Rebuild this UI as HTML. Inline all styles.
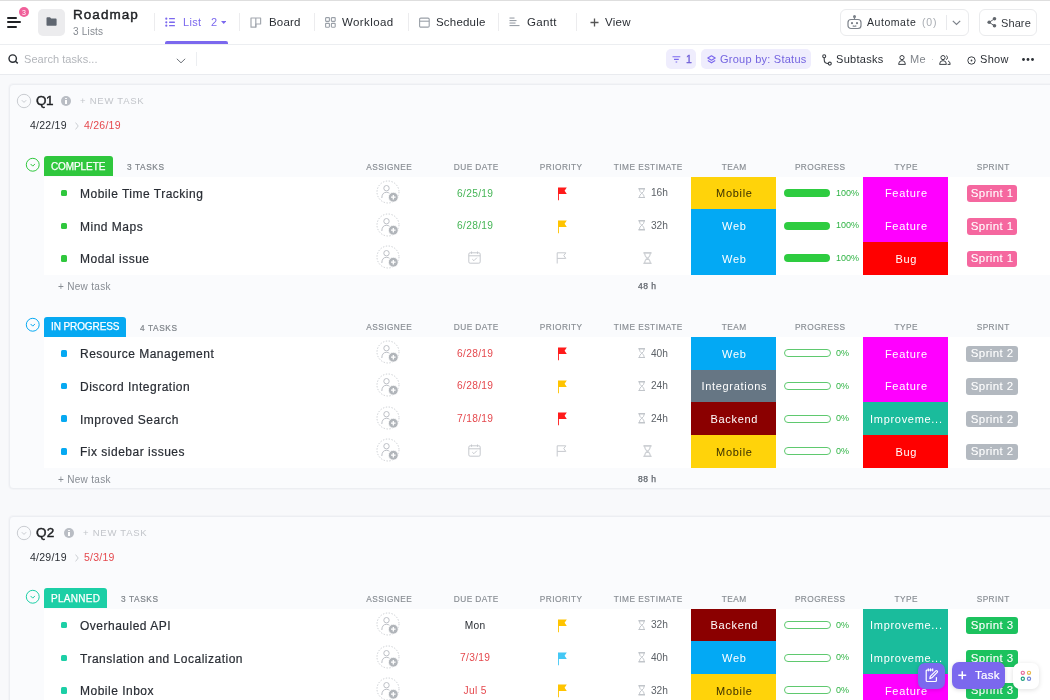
<!DOCTYPE html><html><head><meta charset="utf-8"><style>
html,body{margin:0;padding:0;width:1050px;height:700px;overflow:hidden;background:#f8f9fb;}
body{position:relative;font-family:"Liberation Sans", sans-serif;}
.t{position:absolute;white-space:nowrap;line-height:1;will-change:transform;}
.b{position:absolute;}
</style></head><body>
<div class="b" style="left:0px;top:0px;width:1050px;height:44px;background:#fff;"></div>
<div class="b" style="left:0px;top:0px;width:1050px;height:1px;background:#dedede;"></div>
<div class="b" style="left:0px;top:44px;width:1050px;height:1px;background:#eceef1;"></div>
<div class="b" style="left:6.7px;top:17.0px;width:10.5px;height:1.8px;background:#1f2124;border-radius:1px;"></div>
<div class="b" style="left:6.7px;top:21.4px;width:14px;height:1.8px;background:#1f2124;border-radius:1px;"></div>
<div class="b" style="left:6.7px;top:25.8px;width:10.5px;height:1.8px;background:#1f2124;border-radius:1px;"></div>
<div class="b" style="left:19px;top:7px;width:10px;height:10px;background:#f0609a;border-radius:50%;"></div>
<div class="t" style="left:19.00px;width:10px;text-align:center;top:9.07px;font-size:7px;color:#fff;font-weight:400;letter-spacing:0px;text-indent:0px;">3</div>
<div class="b" style="left:38px;top:9px;width:27px;height:27px;background:#ececee;border-radius:5px;"></div>
<svg class="b" style="left:46px;top:17px" width="11" height="9" viewBox="0 0 11 9"><path d="M0.5 1.2 Q0.5 0.3 1.4 0.3 H4 L5.2 1.6 H9.8 Q10.6 1.6 10.6 2.4 V7.9 Q10.6 8.7 9.8 8.7 H1.3 Q0.5 8.7 0.5 7.9 Z" fill="#5f6670"/></svg>
<div class="t" style="left:72.8px;top:8.47px;font-size:13.5px;color:#1f2124;font-weight:400;letter-spacing:1.05px;-webkit-text-stroke:0.45px #1f2124;">Roadmap</div>
<div class="t" style="left:73px;top:27.14px;font-size:10px;color:#858a91;font-weight:400;letter-spacing:0.2px;">3 Lists</div>
<div class="b" style="left:154px;top:13px;width:1px;height:18px;background:#ececee;"></div>
<div class="b" style="left:239px;top:13px;width:1px;height:18px;background:#ececee;"></div>
<div class="b" style="left:314px;top:13px;width:1px;height:18px;background:#ececee;"></div>
<div class="b" style="left:408px;top:13px;width:1px;height:18px;background:#ececee;"></div>
<div class="b" style="left:498px;top:13px;width:1px;height:18px;background:#ececee;"></div>
<div class="b" style="left:576px;top:13px;width:1px;height:18px;background:#ececee;"></div>
<svg class="b" style="left:164px;top:17px" width="12" height="10" viewBox="0 0 12 10"><g fill="#7b68ee"><circle cx="2.3" cy="1.7" r="1.1"/><circle cx="2.3" cy="5.3" r="1.1"/><circle cx="2.3" cy="8.7" r="1.1"/><rect x="5" y="1" width="6" height="1.3" rx=".6"/><rect x="5" y="4.6" width="6" height="1.3" rx=".6"/><rect x="5" y="8" width="6" height="1.3" rx=".6"/></g></svg>
<div class="t" style="left:182.5px;top:16.99px;font-size:11px;color:#7b68ee;font-weight:400;letter-spacing:0.3px;">List</div>
<div class="t" style="left:211px;top:16.99px;font-size:11px;color:#7b68ee;font-weight:400;letter-spacing:0px;">2</div>
<svg class="b" style="left:220.5px;top:21px" width="5.5" height="3" viewBox="0 0 5.5 3"><path d="M0 0 H5.5 L2.75 3 Z" fill="#7b68ee"/></svg>
<div class="b" style="left:165px;top:41px;width:63px;height:3px;background:#7b68ee;border-radius:2px 2px 0 0;"></div>
<svg class="b" style="left:250px;top:17px" width="12" height="11" viewBox="0 0 12 11"><g fill="none" stroke="#a3a8af" stroke-width="1.2" stroke-linejoin="round"><path d="M1 1 H10.6 V7 H5.8 V10.2 H1 Z"/><path d="M5.8 1 V10.2"/></g></svg>
<div class="t" style="left:268.5px;top:16.57px;font-size:11.5px;color:#2a2e34;font-weight:400;letter-spacing:0.2px;">Board</div>
<svg class="b" style="left:324.5px;top:17px" width="11" height="11" viewBox="0 0 11 11"><g fill="none" stroke="#9aa0a8" stroke-width="1.1"><rect x="0.6" y="0.6" width="3.8" height="3.8" rx=".6"/><rect x="6.4" y="0.6" width="3.8" height="3.8" rx=".6"/><rect x="0.6" y="6.4" width="3.8" height="3.8" rx=".6"/><rect x="6.4" y="6.4" width="3.8" height="3.8" rx=".6"/></g></svg>
<div class="t" style="left:342.3px;top:16.57px;font-size:11.5px;color:#2a2e34;font-weight:400;letter-spacing:0.4px;">Workload</div>
<svg class="b" style="left:418.5px;top:17px" width="11" height="11" viewBox="0 0 11 11"><g fill="none" stroke="#9aa0a8" stroke-width="1.1"><rect x="0.6" y="1.1" width="9.6" height="9" rx="1.2"/><path d="M0.6 4.2 H10.2"/></g></svg>
<div class="t" style="left:436.4px;top:16.57px;font-size:11.5px;color:#2a2e34;font-weight:400;letter-spacing:0.2px;">Schedule</div>
<svg class="b" style="left:508.5px;top:17px" width="11" height="11" viewBox="0 0 11 11"><g fill="#9aa0a8"><rect x="0.5" y="0.5" width="5" height="1.1"/><rect x="0.5" y="3" width="7" height="1.1"/><rect x="0.5" y="5.5" width="6" height="1.1"/><rect x="0.5" y="8" width="10" height="1.1"/></g></svg>
<div class="t" style="left:527px;top:16.57px;font-size:11.5px;color:#2a2e34;font-weight:400;letter-spacing:0.3px;">Gantt</div>
<svg class="b" style="left:590px;top:18px" width="9" height="9" viewBox="0 0 9 9"><g stroke="#555" stroke-width="1.3"><path d="M4.5 0.5 V8.5 M0.5 4.5 H8.5"/></g></svg>
<div class="t" style="left:605px;top:16.87px;font-size:11.5px;color:#2a2e34;font-weight:400;letter-spacing:0.3px;">View</div>
<div class="b" style="left:840px;top:9px;width:129px;height:27px;box-sizing:border-box;border:1px solid #eaebed;border-radius:6px;background:#fff;"></div>
<svg class="b" style="left:846.5px;top:14.5px" width="15" height="15" viewBox="0 0 15 15"><g fill="none" stroke="#7c828a" stroke-width="1.2"><rect x="1" y="4.5" width="13" height="9" rx="3"/><path d="M7.5 4.5 V2"/><circle cx="7.5" cy="1.6" r=".9" fill="#7c828a"/><circle cx="5" cy="8.2" r=".5" fill="#7c828a"/><circle cx="10" cy="8.2" r=".5" fill="#7c828a"/><path d="M5.7 10.7 Q7.5 11.8 9.3 10.7"/></g></svg>
<div class="t" style="left:867.3px;top:16.91px;font-size:10.5px;color:#2a2e34;font-weight:400;letter-spacing:0.55px;">Automate</div>
<div class="t" style="left:921.7px;top:16.91px;font-size:10.5px;color:#a9adb3;font-weight:400;letter-spacing:0.8px;">(0)</div>
<div class="b" style="left:945.5px;top:15px;width:1px;height:15px;background:#e8e9ec;"></div>
<svg class="b" style="left:951.5px;top:19.5px" width="9" height="6" viewBox="0 0 9 6"><path d="M0.8 0.8 L4.5 4.5 L8.2 0.8" fill="none" stroke="#7c828a" stroke-width="1.2"/></svg>
<div class="b" style="left:979px;top:9px;width:57.5px;height:27px;box-sizing:border-box;border:1px solid #eaebed;border-radius:6px;background:#fff;"></div>
<svg class="b" style="left:986.5px;top:17px" width="10" height="11" viewBox="0 0 10 11"><g fill="#62676d"><circle cx="7.5" cy="1.8" r="1.8"/><circle cx="2.2" cy="5.3" r="1.8"/><circle cx="7.5" cy="8.8" r="1.8"/></g><path d="M7.5 1.8 L2.2 5.3 L7.5 8.8" stroke="#62676d" stroke-width="1" fill="none"/></svg>
<div class="t" style="left:1001.3px;top:17.99px;font-size:11px;color:#33373d;font-weight:400;letter-spacing:0.1px;">Share</div>
<div class="b" style="left:0px;top:45px;width:1050px;height:29px;background:#fff;"></div>
<div class="b" style="left:0px;top:74px;width:1050px;height:1px;background:#e9ebef;"></div>
<svg class="b" style="left:7.5px;top:54.3px" width="11" height="10" viewBox="0 0 11 10"><g fill="none" stroke="#2a2e34" stroke-width="1.4"><circle cx="4.7" cy="4.6" r="3.7"/><path d="M7.4 7.3 L9.8 9.4"/></g></svg>
<div class="t" style="left:23.6px;top:53.69px;font-size:11px;color:#b3b6bb;font-weight:400;letter-spacing:0.05px;">Search tasks...</div>
<svg class="b" style="left:175.5px;top:57.5px" width="10" height="6" viewBox="0 0 10 6"><path d="M0.8 0.8 L5 4.8 L9.2 0.8" fill="none" stroke="#6d7279" stroke-width="1"/></svg>
<div class="b" style="left:195.5px;top:52px;width:1px;height:14px;background:#eceef1;"></div>
<div class="b" style="left:666.3px;top:49.4px;width:30px;height:19.5px;background:#efedfd;border-radius:5px;"></div>
<svg class="b" style="left:672px;top:55.5px" width="9" height="7" viewBox="0 0 9 7"><g stroke="#7b68ee" stroke-width="1.1"><path d="M0.5 0.8 H8.3 M2 3.4 H6.8 M3.6 6 H5.2"/></g></svg>
<div class="t" style="left:685.5px;top:54.11px;font-size:10.5px;color:#6b5bd6;font-weight:400;letter-spacing:0px;-webkit-text-stroke:0.3px #6b5bd6;">1</div>
<div class="b" style="left:701.3px;top:49.4px;width:110px;height:19.5px;background:#efedfd;border-radius:5px;"></div>
<svg class="b" style="left:706.5px;top:54.5px" width="9" height="10" viewBox="0 0 9 10"><g fill="none" stroke="#7b68ee" stroke-width="1.2" stroke-linejoin="round"><path d="M4.5 0.8 L8.2 3 L4.5 5.2 L0.8 3 Z"/><path d="M0.8 5.6 L4.5 7.8 L8.2 5.6"/></g></svg>
<div class="t" style="left:720px;top:53.69px;font-size:11px;color:#7464e0;font-weight:400;letter-spacing:0.25px;">Group by: Status</div>
<svg class="b" style="left:821.5px;top:53.5px" width="10" height="12" viewBox="0 0 10 12"><g fill="none" stroke="#3c4046" stroke-width="1.1"><circle cx="2.2" cy="2.2" r="1.5"/><circle cx="7.8" cy="9.6" r="1.5"/><path d="M2.2 3.7 V5.5 Q2.2 9.6 6.3 9.6"/></g></svg>
<div class="t" style="left:836px;top:53.89px;font-size:11px;color:#2a2e34;font-weight:400;letter-spacing:0.3px;">Subtasks</div>
<svg class="b" style="left:897.5px;top:54.5px" width="8" height="10" viewBox="0 0 8 10"><g fill="none" stroke="#3c4046" stroke-width="1"><circle cx="4" cy="2.6" r="2.1"/><path d="M0.6 9.4 Q0.6 5.6 4 5.6 Q7.4 5.6 7.4 9.4 Z"/></g></svg>
<div class="t" style="left:910.3px;top:53.89px;font-size:11px;color:#80858b;font-weight:400;letter-spacing:0.3px;">Me</div>
<div class="b" style="left:931.7px;top:58.8px;width:1.4px;height:1.4px;background:#c4c7cc;border-radius:50%;"></div>
<svg class="b" style="left:939px;top:54.5px" width="12" height="10" viewBox="0 0 12 10"><g fill="none" stroke="#3c4046" stroke-width="1"><circle cx="4" cy="2.6" r="2.1"/><path d="M0.6 9.4 Q0.6 5.6 4 5.6 Q7.4 5.6 7.4 9.4 Z"/><path d="M7.2 0.7 A2.1 2.1 0 0 1 7.2 4.6 M9 5.9 Q11.2 6.5 11.2 9.4 H8.6"/></g></svg>
<svg class="b" style="left:966.5px;top:55.5px" width="9" height="9" viewBox="0 0 9 9"><g fill="none" stroke="#3c4046" stroke-width="1"><circle cx="4.5" cy="4.5" r="3.7"/><circle cx="4.5" cy="4.5" r="0.9" fill="#3c4046" stroke="none"/></g></svg>
<div class="t" style="left:980.3px;top:53.89px;font-size:11px;color:#2a2e34;font-weight:400;letter-spacing:0.3px;">Show</div>
<svg class="b" style="left:1022px;top:57.5px" width="12" height="3" viewBox="0 0 12 3"><g fill="#2a2e34"><circle cx="1.5" cy="1.5" r="1.4"/><circle cx="6" cy="1.5" r="1.4"/><circle cx="10.5" cy="1.5" r="1.4"/></g></svg>
<div class="b" style="left:9px;top:84px;width:1050px;height:405px;box-sizing:border-box;border:1px solid #eceef2;border-radius:4px;background:#fafbfd;box-shadow:0 0 0 1px #f3f4f7;"></div>
<svg class="b" style="left:16.4px;top:93.0px" width="16" height="16" viewBox="0 0 16 16"><circle cx="8.0" cy="8.0" r="6.7" fill="none" stroke="#c9ccd1" stroke-width="1"/><path d="M5.8 7.2 L8.0 9.4 L10.2 7.2" fill="none" stroke="#c9ccd1" stroke-width="1"/></svg>
<div class="t" style="left:36.4px;top:93.77px;font-size:13.5px;color:#1f2124;font-weight:400;letter-spacing:-0.6px;-webkit-text-stroke:0.45px #1f2124;">Q1</div>
<div class="b" style="left:60.7px;top:95.8px;width:10.5px;height:10.5px;border-radius:50%;background:#b9bdc4;"></div>
<div class="b" style="left:65.3px;top:98px;width:1.3px;height:1.3px;background:#fff;border-radius:50%;"></div>
<div class="b" style="left:65.3px;top:100.2px;width:1.3px;height:4px;background:#fff;"></div>
<div class="t" style="left:80.30000000000001px;top:96.26px;font-size:9.5px;color:#c2c5ca;font-weight:400;letter-spacing:0.75px;">+ NEW TASK</div>
<div class="t" style="left:30px;top:119.71px;font-size:10.5px;color:#2a2e34;font-weight:400;letter-spacing:0.25px;">4/22/19</div>
<svg class="b" style="left:74.5px;top:121.5px" width="4" height="8" viewBox="0 0 4 8"><path d="M0.6 0.6 L3.2 4 L0.6 7.4" fill="none" stroke="#c6c9ce" stroke-width="0.9"/></svg>
<div class="t" style="left:84px;top:119.71px;font-size:10.5px;color:#e5484d;font-weight:400;letter-spacing:0.25px;">4/26/19</div>
<svg class="b" style="left:25.450000000000003px;top:156.75px" width="15.5" height="15.5" viewBox="0 0 15.5 15.5"><circle cx="7.75" cy="7.75" r="6.45" fill="none" stroke="#2fc73d" stroke-width="1"/><path d="M5.55 6.95 L7.75 9.15 L9.95 6.95" fill="none" stroke="#2fc73d" stroke-width="1"/></svg>
<div class="b" style="left:43.8px;top:156.3px;width:69.3px;height:20px;background:#2fc73d;border-radius:3px 3px 0 0;"></div>
<div class="t" style="left:51.4px;top:161.94px;font-size:10px;color:#fff;font-weight:400;letter-spacing:-0.1px;-webkit-text-stroke:0.25px #fff;">COMPLETE</div>
<div class="t" style="left:126.89999999999999px;top:163.47px;font-size:8.3px;color:#7f848a;font-weight:400;letter-spacing:0.6px;-webkit-text-stroke:0.2px #7f848a;">3 TASKS</div>
<div class="t" style="left:329.30px;width:120px;text-align:center;top:162.77px;font-size:8.3px;color:#878c92;font-weight:400;letter-spacing:0.45px;text-indent:0.45px;-webkit-text-stroke:0.15px #878c92;">ASSIGNEE</div>
<div class="t" style="left:415.50px;width:120px;text-align:center;top:162.77px;font-size:8.3px;color:#878c92;font-weight:400;letter-spacing:0.45px;text-indent:0.45px;-webkit-text-stroke:0.15px #878c92;">DUE DATE</div>
<div class="t" style="left:501.00px;width:120px;text-align:center;top:162.77px;font-size:8.3px;color:#878c92;font-weight:400;letter-spacing:0.45px;text-indent:0.45px;-webkit-text-stroke:0.15px #878c92;">PRIORITY</div>
<div class="t" style="left:588.00px;width:120px;text-align:center;top:162.77px;font-size:8.3px;color:#878c92;font-weight:400;letter-spacing:0.45px;text-indent:0.45px;-webkit-text-stroke:0.15px #878c92;">TIME ESTIMATE</div>
<div class="t" style="left:674.00px;width:120px;text-align:center;top:162.77px;font-size:8.3px;color:#878c92;font-weight:400;letter-spacing:0.45px;text-indent:0.45px;-webkit-text-stroke:0.15px #878c92;">TEAM</div>
<div class="t" style="left:760.00px;width:120px;text-align:center;top:162.77px;font-size:8.3px;color:#878c92;font-weight:400;letter-spacing:0.45px;text-indent:0.45px;-webkit-text-stroke:0.15px #878c92;">PROGRESS</div>
<div class="t" style="left:846.00px;width:120px;text-align:center;top:162.77px;font-size:8.3px;color:#878c92;font-weight:400;letter-spacing:0.45px;text-indent:0.45px;-webkit-text-stroke:0.15px #878c92;">TYPE</div>
<div class="t" style="left:932.50px;width:120px;text-align:center;top:162.77px;font-size:8.3px;color:#878c92;font-weight:400;letter-spacing:0.45px;text-indent:0.45px;-webkit-text-stroke:0.15px #878c92;">SPRINT</div>
<div class="b" style="left:43.8px;top:176.8px;width:1006.2px;height:98.001px;background:#fff;"></div>
<div class="b" style="left:60.8px;top:189.83350000000002px;width:6.6px;height:6.6px;background:#2fc73d;border-radius:1.5px;"></div>
<div class="t" style="left:80.3px;top:187.98px;font-size:12px;color:#292d34;font-weight:400;letter-spacing:0.5px;-webkit-text-stroke:0.2px #292d34;">Mobile Time Tracking</div>
<svg class="b" style="left:376.1px;top:180.13350000000003px" width="24" height="24" viewBox="0 0 24 24"><circle cx="12" cy="12" r="11" fill="none" stroke="#c9ccd1" stroke-width="1" stroke-dasharray="1.3 1.6"/><g fill="none" stroke="#b5b9bf" stroke-width="0.9"><circle cx="10.5" cy="8.2" r="2.7"/><path d="M5.8 18 Q6 12.3 10.5 12.3 Q12.5 12.3 13.5 13.3"/></g><circle cx="17.3" cy="17.2" r="4.9" fill="#b1b5ba" stroke="#fff" stroke-width="0.8"/><path d="M17.3 14.9 V19.5 M15 17.2 H19.6" stroke="#fff" stroke-width="1.3"/></svg>
<div class="t" style="left:374.72px;width:200px;text-align:center;top:188.50px;font-size:10.2px;color:#45b556;font-weight:400;letter-spacing:0.35px;text-indent:0.35px;">6/25/19</div>
<svg class="b" style="left:556.5px;top:186.83350000000002px" width="11" height="14" viewBox="0 0 11 14"><path d="M1 0.5 H9.8 L7.6 3.7 L9.8 6.9 H1.9 V13.3 H1 Z" fill="#ff1b1b"/></svg>
<svg class="b" style="left:637.5px;top:187.73350000000002px" width="7.6" height="10.45" viewBox="0 0 8 11"><g fill="none" stroke="#c1c5ca" stroke-width="1"><path d="M1.4 0.7 Q1.4 4 4 5.5 Q6.6 4 6.6 0.7 M1.4 10.3 Q1.4 7 4 5.5 Q6.6 7 6.6 10.3"/></g><rect x="0.3" y="0" width="7.4" height="1.6" rx=".5" fill="#c1c5ca"/><rect x="0.3" y="9.4" width="7.4" height="1.6" rx=".5" fill="#c1c5ca"/></svg>
<div class="t" style="left:651.4px;top:188.40px;font-size:10.2px;color:#5d6268;font-weight:400;letter-spacing:-0.1px;">16h</div>
<div class="b" style="left:691.1px;top:176.8px;width:84.7px;height:33.067px;background:#ffd30a;"></div>
<div class="t" style="left:683.50px;width:100px;text-align:center;top:188.32px;font-size:11px;color:#3b3000;font-weight:400;letter-spacing:0.7px;text-indent:0.7px;">Mobile</div>
<div class="b" style="left:784px;top:189.13350000000003px;width:46px;height:8px;background:#2ecc40;border-radius:4px;"></div>
<div class="t" style="left:836px;top:188.82px;font-size:9px;color:#2fb344;font-weight:400;letter-spacing:0px;">100%</div>
<div class="b" style="left:863.4px;top:176.8px;width:84.7px;height:33.067px;background:#ff00ff;"></div>
<div class="t" style="left:855.70px;width:100px;text-align:center;top:188.32px;font-size:11px;color:#fff;font-weight:400;letter-spacing:0.7px;text-indent:0.7px;">Feature</div>
<div class="b" style="left:967.3px;top:185.33350000000002px;width:49.4px;height:16.5px;background:#f5679f;border-radius:3px;"></div>
<div class="t" style="left:962.00px;width:60px;text-align:center;top:188.00px;font-size:11.5px;color:#fff;font-weight:400;letter-spacing:0.4px;text-indent:0.4px;-webkit-text-stroke:0.08px #fff;">Sprint 1</div>
<div class="b" style="left:60.8px;top:222.5005px;width:6.6px;height:6.6px;background:#2fc73d;border-radius:1.5px;"></div>
<div class="t" style="left:80.3px;top:220.64px;font-size:12px;color:#292d34;font-weight:400;letter-spacing:0.5px;-webkit-text-stroke:0.2px #292d34;">Mind Maps</div>
<svg class="b" style="left:376.1px;top:212.8005px" width="24" height="24" viewBox="0 0 24 24"><circle cx="12" cy="12" r="11" fill="none" stroke="#c9ccd1" stroke-width="1" stroke-dasharray="1.3 1.6"/><g fill="none" stroke="#b5b9bf" stroke-width="0.9"><circle cx="10.5" cy="8.2" r="2.7"/><path d="M5.8 18 Q6 12.3 10.5 12.3 Q12.5 12.3 13.5 13.3"/></g><circle cx="17.3" cy="17.2" r="4.9" fill="#b1b5ba" stroke="#fff" stroke-width="0.8"/><path d="M17.3 14.9 V19.5 M15 17.2 H19.6" stroke="#fff" stroke-width="1.3"/></svg>
<div class="t" style="left:374.72px;width:200px;text-align:center;top:221.17px;font-size:10.2px;color:#45b556;font-weight:400;letter-spacing:0.35px;text-indent:0.35px;">6/28/19</div>
<svg class="b" style="left:556.5px;top:219.5005px" width="11" height="14" viewBox="0 0 11 14"><path d="M1 0.5 H9.8 L7.6 3.7 L9.8 6.9 H1.9 V13.3 H1 Z" fill="#ffc400"/></svg>
<svg class="b" style="left:637.5px;top:220.4005px" width="7.6" height="10.45" viewBox="0 0 8 11"><g fill="none" stroke="#c1c5ca" stroke-width="1"><path d="M1.4 0.7 Q1.4 4 4 5.5 Q6.6 4 6.6 0.7 M1.4 10.3 Q1.4 7 4 5.5 Q6.6 7 6.6 10.3"/></g><rect x="0.3" y="0" width="7.4" height="1.6" rx=".5" fill="#c1c5ca"/><rect x="0.3" y="9.4" width="7.4" height="1.6" rx=".5" fill="#c1c5ca"/></svg>
<div class="t" style="left:651.4px;top:221.07px;font-size:10.2px;color:#5d6268;font-weight:400;letter-spacing:-0.1px;">32h</div>
<div class="b" style="left:691.1px;top:209.467px;width:84.7px;height:33.067px;background:#03a9f4;"></div>
<div class="t" style="left:683.50px;width:100px;text-align:center;top:220.99px;font-size:11px;color:#fff;font-weight:400;letter-spacing:0.7px;text-indent:0.7px;">Web</div>
<div class="b" style="left:784px;top:221.8005px;width:46px;height:8px;background:#2ecc40;border-radius:4px;"></div>
<div class="t" style="left:836px;top:221.48px;font-size:9px;color:#2fb344;font-weight:400;letter-spacing:0px;">100%</div>
<div class="b" style="left:863.4px;top:209.467px;width:84.7px;height:33.067px;background:#ff00ff;"></div>
<div class="t" style="left:855.70px;width:100px;text-align:center;top:220.99px;font-size:11px;color:#fff;font-weight:400;letter-spacing:0.7px;text-indent:0.7px;">Feature</div>
<div class="b" style="left:967.3px;top:218.0005px;width:49.4px;height:16.5px;background:#f5679f;border-radius:3px;"></div>
<div class="t" style="left:962.00px;width:60px;text-align:center;top:220.67px;font-size:11.5px;color:#fff;font-weight:400;letter-spacing:0.4px;text-indent:0.4px;-webkit-text-stroke:0.08px #fff;">Sprint 1</div>
<div class="b" style="left:60.8px;top:255.16750000000002px;width:6.6px;height:6.6px;background:#2fc73d;border-radius:1.5px;"></div>
<div class="t" style="left:80.3px;top:253.31px;font-size:12px;color:#292d34;font-weight:400;letter-spacing:0.5px;-webkit-text-stroke:0.2px #292d34;">Modal issue</div>
<svg class="b" style="left:376.1px;top:245.46750000000003px" width="24" height="24" viewBox="0 0 24 24"><circle cx="12" cy="12" r="11" fill="none" stroke="#c9ccd1" stroke-width="1" stroke-dasharray="1.3 1.6"/><g fill="none" stroke="#b5b9bf" stroke-width="0.9"><circle cx="10.5" cy="8.2" r="2.7"/><path d="M5.8 18 Q6 12.3 10.5 12.3 Q12.5 12.3 13.5 13.3"/></g><circle cx="17.3" cy="17.2" r="4.9" fill="#b1b5ba" stroke="#fff" stroke-width="0.8"/><path d="M17.3 14.9 V19.5 M15 17.2 H19.6" stroke="#fff" stroke-width="1.3"/></svg>
<svg class="b" style="left:468px;top:250.96750000000003px" width="13" height="13" viewBox="0 0 13 13"><g fill="none" stroke="#c6c9ce" stroke-width="1"><rect x="0.8" y="1.8" width="11.4" height="10.4" rx="1.3"/><path d="M0.8 4.8 H12.2 M3.5 0.5 V2.8 M9.5 0.5 V2.8 M4.3 8.2 L5.9 9.7 L8.9 6.7"/></g></svg>
<svg class="b" style="left:556.3px;top:251.96750000000003px" width="11" height="12" viewBox="0 0 11 12"><path d="M1.2 11.5 V0.8 H9.8 L7.8 3.6 L9.8 6.4 H1.2" fill="none" stroke="#c6c9ce" stroke-width="1"/></svg>
<svg class="b" style="left:643px;top:252.16750000000002px" width="8.96" height="12.32" viewBox="0 0 8 11"><g fill="none" stroke="#cdd0d4" stroke-width="1"><path d="M1.4 0.7 Q1.4 4 4 5.5 Q6.6 4 6.6 0.7 M1.4 10.3 Q1.4 7 4 5.5 Q6.6 7 6.6 10.3"/></g><rect x="0.3" y="0" width="7.4" height="1.6" rx=".5" fill="#cdd0d4"/><rect x="0.3" y="9.4" width="7.4" height="1.6" rx=".5" fill="#cdd0d4"/></svg>
<div class="b" style="left:691.1px;top:242.13400000000001px;width:84.7px;height:33.067px;background:#03a9f4;"></div>
<div class="t" style="left:683.50px;width:100px;text-align:center;top:253.66px;font-size:11px;color:#fff;font-weight:400;letter-spacing:0.7px;text-indent:0.7px;">Web</div>
<div class="b" style="left:784px;top:254.46750000000003px;width:46px;height:8px;background:#2ecc40;border-radius:4px;"></div>
<div class="t" style="left:836px;top:254.15px;font-size:9px;color:#2fb344;font-weight:400;letter-spacing:0px;">100%</div>
<div class="b" style="left:863.4px;top:242.13400000000001px;width:84.7px;height:33.067px;background:#ff0000;"></div>
<div class="t" style="left:855.70px;width:100px;text-align:center;top:253.66px;font-size:11px;color:#fff;font-weight:400;letter-spacing:0.7px;text-indent:0.7px;">Bug</div>
<div class="b" style="left:967.3px;top:250.66750000000002px;width:49.4px;height:16.5px;background:#f5679f;border-radius:3px;"></div>
<div class="t" style="left:962.00px;width:60px;text-align:center;top:253.33px;font-size:11.5px;color:#fff;font-weight:400;letter-spacing:0.4px;text-indent:0.4px;-webkit-text-stroke:0.08px #fff;">Sprint 1</div>
<div class="t" style="left:57.8px;top:281.64px;font-size:10px;color:#878c93;font-weight:400;letter-spacing:0.3px;">+ New task</div>
<div class="t" style="left:547.30px;width:200px;text-align:center;top:281.81px;font-size:8.5px;color:#5f646b;font-weight:400;letter-spacing:0.4px;text-indent:0.4px;-webkit-text-stroke:0.25px #5f646b;">48 h</div>
<svg class="b" style="left:25.450000000000003px;top:316.95px" width="15.5" height="15.5" viewBox="0 0 15.5 15.5"><circle cx="7.75" cy="7.75" r="6.45" fill="none" stroke="#06a9f2" stroke-width="1"/><path d="M5.55 6.95 L7.75 9.15 L9.95 6.95" fill="none" stroke="#06a9f2" stroke-width="1"/></svg>
<div class="b" style="left:43.8px;top:316.5px;width:82.3px;height:20px;background:#06a9f2;border-radius:3px 3px 0 0;"></div>
<div class="t" style="left:51.4px;top:322.14px;font-size:10px;color:#fff;font-weight:400;letter-spacing:-0.1px;-webkit-text-stroke:0.25px #fff;">IN PROGRESS</div>
<div class="t" style="left:139.9px;top:323.67px;font-size:8.3px;color:#7f848a;font-weight:400;letter-spacing:0.6px;-webkit-text-stroke:0.2px #7f848a;">4 TASKS</div>
<div class="t" style="left:329.30px;width:120px;text-align:center;top:322.97px;font-size:8.3px;color:#878c92;font-weight:400;letter-spacing:0.45px;text-indent:0.45px;-webkit-text-stroke:0.15px #878c92;">ASSIGNEE</div>
<div class="t" style="left:415.50px;width:120px;text-align:center;top:322.97px;font-size:8.3px;color:#878c92;font-weight:400;letter-spacing:0.45px;text-indent:0.45px;-webkit-text-stroke:0.15px #878c92;">DUE DATE</div>
<div class="t" style="left:501.00px;width:120px;text-align:center;top:322.97px;font-size:8.3px;color:#878c92;font-weight:400;letter-spacing:0.45px;text-indent:0.45px;-webkit-text-stroke:0.15px #878c92;">PRIORITY</div>
<div class="t" style="left:588.00px;width:120px;text-align:center;top:322.97px;font-size:8.3px;color:#878c92;font-weight:400;letter-spacing:0.45px;text-indent:0.45px;-webkit-text-stroke:0.15px #878c92;">TIME ESTIMATE</div>
<div class="t" style="left:674.00px;width:120px;text-align:center;top:322.97px;font-size:8.3px;color:#878c92;font-weight:400;letter-spacing:0.45px;text-indent:0.45px;-webkit-text-stroke:0.15px #878c92;">TEAM</div>
<div class="t" style="left:760.00px;width:120px;text-align:center;top:322.97px;font-size:8.3px;color:#878c92;font-weight:400;letter-spacing:0.45px;text-indent:0.45px;-webkit-text-stroke:0.15px #878c92;">PROGRESS</div>
<div class="t" style="left:846.00px;width:120px;text-align:center;top:322.97px;font-size:8.3px;color:#878c92;font-weight:400;letter-spacing:0.45px;text-indent:0.45px;-webkit-text-stroke:0.15px #878c92;">TYPE</div>
<div class="t" style="left:932.50px;width:120px;text-align:center;top:322.97px;font-size:8.3px;color:#878c92;font-weight:400;letter-spacing:0.45px;text-indent:0.45px;-webkit-text-stroke:0.15px #878c92;">SPRINT</div>
<div class="b" style="left:43.8px;top:337.0px;width:1006.2px;height:130.668px;background:#fff;"></div>
<div class="b" style="left:60.8px;top:350.0335px;width:6.6px;height:6.6px;background:#06a9f2;border-radius:1.5px;"></div>
<div class="t" style="left:80.3px;top:348.18px;font-size:12px;color:#292d34;font-weight:400;letter-spacing:0.5px;-webkit-text-stroke:0.2px #292d34;">Resource Management</div>
<svg class="b" style="left:376.1px;top:340.3335px" width="24" height="24" viewBox="0 0 24 24"><circle cx="12" cy="12" r="11" fill="none" stroke="#c9ccd1" stroke-width="1" stroke-dasharray="1.3 1.6"/><g fill="none" stroke="#b5b9bf" stroke-width="0.9"><circle cx="10.5" cy="8.2" r="2.7"/><path d="M5.8 18 Q6 12.3 10.5 12.3 Q12.5 12.3 13.5 13.3"/></g><circle cx="17.3" cy="17.2" r="4.9" fill="#b1b5ba" stroke="#fff" stroke-width="0.8"/><path d="M17.3 14.9 V19.5 M15 17.2 H19.6" stroke="#fff" stroke-width="1.3"/></svg>
<div class="t" style="left:374.72px;width:200px;text-align:center;top:348.70px;font-size:10.2px;color:#e5484d;font-weight:400;letter-spacing:0.35px;text-indent:0.35px;">6/28/19</div>
<svg class="b" style="left:556.5px;top:347.0335px" width="11" height="14" viewBox="0 0 11 14"><path d="M1 0.5 H9.8 L7.6 3.7 L9.8 6.9 H1.9 V13.3 H1 Z" fill="#ff1b1b"/></svg>
<svg class="b" style="left:637.5px;top:347.93350000000004px" width="7.6" height="10.45" viewBox="0 0 8 11"><g fill="none" stroke="#c1c5ca" stroke-width="1"><path d="M1.4 0.7 Q1.4 4 4 5.5 Q6.6 4 6.6 0.7 M1.4 10.3 Q1.4 7 4 5.5 Q6.6 7 6.6 10.3"/></g><rect x="0.3" y="0" width="7.4" height="1.6" rx=".5" fill="#c1c5ca"/><rect x="0.3" y="9.4" width="7.4" height="1.6" rx=".5" fill="#c1c5ca"/></svg>
<div class="t" style="left:651.4px;top:348.60px;font-size:10.2px;color:#5d6268;font-weight:400;letter-spacing:-0.1px;">40h</div>
<div class="b" style="left:691.1px;top:337.0px;width:84.7px;height:33.067px;background:#03a9f4;"></div>
<div class="t" style="left:683.50px;width:100px;text-align:center;top:348.52px;font-size:11px;color:#fff;font-weight:400;letter-spacing:0.7px;text-indent:0.7px;">Web</div>
<div class="b" style="left:784px;top:349.3335px;width:46.5px;height:8px;box-sizing:border-box;border:1px solid #5fc96f;border-radius:4px;background:#fff;"></div>
<div class="t" style="left:836px;top:349.02px;font-size:9px;color:#2fb344;font-weight:400;letter-spacing:0px;">0%</div>
<div class="b" style="left:863.4px;top:337.0px;width:84.7px;height:33.067px;background:#ff00ff;"></div>
<div class="t" style="left:855.70px;width:100px;text-align:center;top:348.52px;font-size:11px;color:#fff;font-weight:400;letter-spacing:0.7px;text-indent:0.7px;">Feature</div>
<div class="b" style="left:966.25px;top:345.5335px;width:51.5px;height:16.5px;background:#b3b9c0;border-radius:3px;"></div>
<div class="t" style="left:962.00px;width:60px;text-align:center;top:348.20px;font-size:11.5px;color:#fff;font-weight:400;letter-spacing:0.4px;text-indent:0.4px;-webkit-text-stroke:0.08px #fff;">Sprint 2</div>
<div class="b" style="left:60.8px;top:382.70050000000003px;width:6.6px;height:6.6px;background:#06a9f2;border-radius:1.5px;"></div>
<div class="t" style="left:80.3px;top:380.84px;font-size:12px;color:#292d34;font-weight:400;letter-spacing:0.5px;-webkit-text-stroke:0.2px #292d34;">Discord Integration</div>
<svg class="b" style="left:376.1px;top:373.00050000000005px" width="24" height="24" viewBox="0 0 24 24"><circle cx="12" cy="12" r="11" fill="none" stroke="#c9ccd1" stroke-width="1" stroke-dasharray="1.3 1.6"/><g fill="none" stroke="#b5b9bf" stroke-width="0.9"><circle cx="10.5" cy="8.2" r="2.7"/><path d="M5.8 18 Q6 12.3 10.5 12.3 Q12.5 12.3 13.5 13.3"/></g><circle cx="17.3" cy="17.2" r="4.9" fill="#b1b5ba" stroke="#fff" stroke-width="0.8"/><path d="M17.3 14.9 V19.5 M15 17.2 H19.6" stroke="#fff" stroke-width="1.3"/></svg>
<div class="t" style="left:374.72px;width:200px;text-align:center;top:381.37px;font-size:10.2px;color:#e5484d;font-weight:400;letter-spacing:0.35px;text-indent:0.35px;">6/28/19</div>
<svg class="b" style="left:556.5px;top:379.70050000000003px" width="11" height="14" viewBox="0 0 11 14"><path d="M1 0.5 H9.8 L7.6 3.7 L9.8 6.9 H1.9 V13.3 H1 Z" fill="#ffc400"/></svg>
<svg class="b" style="left:637.5px;top:380.60050000000007px" width="7.6" height="10.45" viewBox="0 0 8 11"><g fill="none" stroke="#c1c5ca" stroke-width="1"><path d="M1.4 0.7 Q1.4 4 4 5.5 Q6.6 4 6.6 0.7 M1.4 10.3 Q1.4 7 4 5.5 Q6.6 7 6.6 10.3"/></g><rect x="0.3" y="0" width="7.4" height="1.6" rx=".5" fill="#c1c5ca"/><rect x="0.3" y="9.4" width="7.4" height="1.6" rx=".5" fill="#c1c5ca"/></svg>
<div class="t" style="left:651.4px;top:381.27px;font-size:10.2px;color:#5d6268;font-weight:400;letter-spacing:-0.1px;">24h</div>
<div class="b" style="left:691.1px;top:369.66700000000003px;width:84.7px;height:33.067px;background:#667684;"></div>
<div class="t" style="left:683.50px;width:100px;text-align:center;top:381.19px;font-size:11px;color:#fff;font-weight:400;letter-spacing:0.7px;text-indent:0.7px;">Integrations</div>
<div class="b" style="left:784px;top:382.00050000000005px;width:46.5px;height:8px;box-sizing:border-box;border:1px solid #5fc96f;border-radius:4px;background:#fff;"></div>
<div class="t" style="left:836px;top:381.68px;font-size:9px;color:#2fb344;font-weight:400;letter-spacing:0px;">0%</div>
<div class="b" style="left:863.4px;top:369.66700000000003px;width:84.7px;height:33.067px;background:#ff00ff;"></div>
<div class="t" style="left:855.70px;width:100px;text-align:center;top:381.19px;font-size:11px;color:#fff;font-weight:400;letter-spacing:0.7px;text-indent:0.7px;">Feature</div>
<div class="b" style="left:966.25px;top:378.20050000000003px;width:51.5px;height:16.5px;background:#b3b9c0;border-radius:3px;"></div>
<div class="t" style="left:962.00px;width:60px;text-align:center;top:380.87px;font-size:11.5px;color:#fff;font-weight:400;letter-spacing:0.4px;text-indent:0.4px;-webkit-text-stroke:0.08px #fff;">Sprint 2</div>
<div class="b" style="left:60.8px;top:415.3675px;width:6.6px;height:6.6px;background:#06a9f2;border-radius:1.5px;"></div>
<div class="t" style="left:80.3px;top:413.51px;font-size:12px;color:#292d34;font-weight:400;letter-spacing:0.5px;-webkit-text-stroke:0.2px #292d34;">Improved Search</div>
<svg class="b" style="left:376.1px;top:405.6675px" width="24" height="24" viewBox="0 0 24 24"><circle cx="12" cy="12" r="11" fill="none" stroke="#c9ccd1" stroke-width="1" stroke-dasharray="1.3 1.6"/><g fill="none" stroke="#b5b9bf" stroke-width="0.9"><circle cx="10.5" cy="8.2" r="2.7"/><path d="M5.8 18 Q6 12.3 10.5 12.3 Q12.5 12.3 13.5 13.3"/></g><circle cx="17.3" cy="17.2" r="4.9" fill="#b1b5ba" stroke="#fff" stroke-width="0.8"/><path d="M17.3 14.9 V19.5 M15 17.2 H19.6" stroke="#fff" stroke-width="1.3"/></svg>
<div class="t" style="left:374.72px;width:200px;text-align:center;top:414.03px;font-size:10.2px;color:#e5484d;font-weight:400;letter-spacing:0.35px;text-indent:0.35px;">7/18/19</div>
<svg class="b" style="left:556.5px;top:412.3675px" width="11" height="14" viewBox="0 0 11 14"><path d="M1 0.5 H9.8 L7.6 3.7 L9.8 6.9 H1.9 V13.3 H1 Z" fill="#ff1b1b"/></svg>
<svg class="b" style="left:637.5px;top:413.26750000000004px" width="7.6" height="10.45" viewBox="0 0 8 11"><g fill="none" stroke="#c1c5ca" stroke-width="1"><path d="M1.4 0.7 Q1.4 4 4 5.5 Q6.6 4 6.6 0.7 M1.4 10.3 Q1.4 7 4 5.5 Q6.6 7 6.6 10.3"/></g><rect x="0.3" y="0" width="7.4" height="1.6" rx=".5" fill="#c1c5ca"/><rect x="0.3" y="9.4" width="7.4" height="1.6" rx=".5" fill="#c1c5ca"/></svg>
<div class="t" style="left:651.4px;top:413.93px;font-size:10.2px;color:#5d6268;font-weight:400;letter-spacing:-0.1px;">24h</div>
<div class="b" style="left:691.1px;top:402.334px;width:84.7px;height:33.067px;background:#8b0000;"></div>
<div class="t" style="left:683.50px;width:100px;text-align:center;top:413.86px;font-size:11px;color:#fff;font-weight:400;letter-spacing:0.7px;text-indent:0.7px;">Backend</div>
<div class="b" style="left:784px;top:414.6675px;width:46.5px;height:8px;box-sizing:border-box;border:1px solid #5fc96f;border-radius:4px;background:#fff;"></div>
<div class="t" style="left:836px;top:414.35px;font-size:9px;color:#2fb344;font-weight:400;letter-spacing:0px;">0%</div>
<div class="b" style="left:863.4px;top:402.334px;width:84.7px;height:33.067px;background:#1abc9c;"></div>
<div class="t" style="left:855.70px;width:100px;text-align:center;top:413.86px;font-size:11px;color:#fff;font-weight:400;letter-spacing:0.7px;text-indent:0.7px;">Improveme...</div>
<div class="b" style="left:966.25px;top:410.8675px;width:51.5px;height:16.5px;background:#b3b9c0;border-radius:3px;"></div>
<div class="t" style="left:962.00px;width:60px;text-align:center;top:413.53px;font-size:11.5px;color:#fff;font-weight:400;letter-spacing:0.4px;text-indent:0.4px;-webkit-text-stroke:0.08px #fff;">Sprint 2</div>
<div class="b" style="left:60.8px;top:448.0345px;width:6.6px;height:6.6px;background:#06a9f2;border-radius:1.5px;"></div>
<div class="t" style="left:80.3px;top:446.18px;font-size:12px;color:#292d34;font-weight:400;letter-spacing:0.5px;-webkit-text-stroke:0.2px #292d34;">Fix sidebar issues</div>
<svg class="b" style="left:376.1px;top:438.3345px" width="24" height="24" viewBox="0 0 24 24"><circle cx="12" cy="12" r="11" fill="none" stroke="#c9ccd1" stroke-width="1" stroke-dasharray="1.3 1.6"/><g fill="none" stroke="#b5b9bf" stroke-width="0.9"><circle cx="10.5" cy="8.2" r="2.7"/><path d="M5.8 18 Q6 12.3 10.5 12.3 Q12.5 12.3 13.5 13.3"/></g><circle cx="17.3" cy="17.2" r="4.9" fill="#b1b5ba" stroke="#fff" stroke-width="0.8"/><path d="M17.3 14.9 V19.5 M15 17.2 H19.6" stroke="#fff" stroke-width="1.3"/></svg>
<svg class="b" style="left:468px;top:443.8345px" width="13" height="13" viewBox="0 0 13 13"><g fill="none" stroke="#c6c9ce" stroke-width="1"><rect x="0.8" y="1.8" width="11.4" height="10.4" rx="1.3"/><path d="M0.8 4.8 H12.2 M3.5 0.5 V2.8 M9.5 0.5 V2.8 M4.3 8.2 L5.9 9.7 L8.9 6.7"/></g></svg>
<svg class="b" style="left:556.3px;top:444.8345px" width="11" height="12" viewBox="0 0 11 12"><path d="M1.2 11.5 V0.8 H9.8 L7.8 3.6 L9.8 6.4 H1.2" fill="none" stroke="#c6c9ce" stroke-width="1"/></svg>
<svg class="b" style="left:643px;top:445.0345px" width="8.96" height="12.32" viewBox="0 0 8 11"><g fill="none" stroke="#cdd0d4" stroke-width="1"><path d="M1.4 0.7 Q1.4 4 4 5.5 Q6.6 4 6.6 0.7 M1.4 10.3 Q1.4 7 4 5.5 Q6.6 7 6.6 10.3"/></g><rect x="0.3" y="0" width="7.4" height="1.6" rx=".5" fill="#cdd0d4"/><rect x="0.3" y="9.4" width="7.4" height="1.6" rx=".5" fill="#cdd0d4"/></svg>
<div class="b" style="left:691.1px;top:435.001px;width:84.7px;height:33.067px;background:#ffd30a;"></div>
<div class="t" style="left:683.50px;width:100px;text-align:center;top:446.52px;font-size:11px;color:#3b3000;font-weight:400;letter-spacing:0.7px;text-indent:0.7px;">Mobile</div>
<div class="b" style="left:784px;top:447.3345px;width:46.5px;height:8px;box-sizing:border-box;border:1px solid #5fc96f;border-radius:4px;background:#fff;"></div>
<div class="t" style="left:836px;top:447.02px;font-size:9px;color:#2fb344;font-weight:400;letter-spacing:0px;">0%</div>
<div class="b" style="left:863.4px;top:435.001px;width:84.7px;height:33.067px;background:#ff0000;"></div>
<div class="t" style="left:855.70px;width:100px;text-align:center;top:446.52px;font-size:11px;color:#fff;font-weight:400;letter-spacing:0.7px;text-indent:0.7px;">Bug</div>
<div class="b" style="left:966.25px;top:443.5345px;width:51.5px;height:16.5px;background:#b3b9c0;border-radius:3px;"></div>
<div class="t" style="left:962.00px;width:60px;text-align:center;top:446.20px;font-size:11.5px;color:#fff;font-weight:400;letter-spacing:0.4px;text-indent:0.4px;-webkit-text-stroke:0.08px #fff;">Sprint 2</div>
<div class="t" style="left:57.8px;top:474.50px;font-size:10px;color:#878c93;font-weight:400;letter-spacing:0.3px;">+ New task</div>
<div class="t" style="left:547.30px;width:200px;text-align:center;top:474.67px;font-size:8.5px;color:#5f646b;font-weight:400;letter-spacing:0.4px;text-indent:0.4px;-webkit-text-stroke:0.25px #5f646b;">88 h</div>
<div class="b" style="left:9px;top:516px;width:1050px;height:484px;box-sizing:border-box;border:1px solid #eceef2;border-radius:4px;background:#fafbfd;box-shadow:0 0 0 1px #f3f4f7;"></div>
<svg class="b" style="left:16.4px;top:525.0px" width="16" height="16" viewBox="0 0 16 16"><circle cx="8.0" cy="8.0" r="6.7" fill="none" stroke="#c9ccd1" stroke-width="1"/><path d="M5.8 7.2 L8.0 9.4 L10.2 7.2" fill="none" stroke="#c9ccd1" stroke-width="1"/></svg>
<div class="t" style="left:36.4px;top:525.77px;font-size:13.5px;color:#1f2124;font-weight:400;letter-spacing:0.3px;-webkit-text-stroke:0.45px #1f2124;">Q2</div>
<div class="b" style="left:63.7px;top:527.8px;width:10.5px;height:10.5px;border-radius:50%;background:#b9bdc4;"></div>
<div class="b" style="left:68.3px;top:530px;width:1.3px;height:1.3px;background:#fff;border-radius:50%;"></div>
<div class="b" style="left:68.3px;top:532.2px;width:1.3px;height:4px;background:#fff;"></div>
<div class="t" style="left:83.30000000000001px;top:528.26px;font-size:9.5px;color:#c2c5ca;font-weight:400;letter-spacing:0.75px;">+ NEW TASK</div>
<div class="t" style="left:30px;top:551.71px;font-size:10.5px;color:#2a2e34;font-weight:400;letter-spacing:0.25px;">4/29/19</div>
<svg class="b" style="left:74.5px;top:553.5px" width="4" height="8" viewBox="0 0 4 8"><path d="M0.6 0.6 L3.2 4 L0.6 7.4" fill="none" stroke="#c6c9ce" stroke-width="0.9"/></svg>
<div class="t" style="left:84px;top:551.71px;font-size:10.5px;color:#e5484d;font-weight:400;letter-spacing:0.25px;">5/3/19</div>
<svg class="b" style="left:25.450000000000003px;top:588.75px" width="15.5" height="15.5" viewBox="0 0 15.5 15.5"><circle cx="7.75" cy="7.75" r="6.45" fill="none" stroke="#1ccfa6" stroke-width="1"/><path d="M5.55 6.95 L7.75 9.15 L9.95 6.95" fill="none" stroke="#1ccfa6" stroke-width="1"/></svg>
<div class="b" style="left:43.8px;top:588.3px;width:63.2px;height:20px;background:#1ccfa6;border-radius:3px 3px 0 0;"></div>
<div class="t" style="left:51.4px;top:593.93px;font-size:10px;color:#fff;font-weight:400;letter-spacing:0.3px;-webkit-text-stroke:0.25px #fff;">PLANNED</div>
<div class="t" style="left:120.8px;top:595.47px;font-size:8.3px;color:#7f848a;font-weight:400;letter-spacing:0.6px;-webkit-text-stroke:0.2px #7f848a;">3 TASKS</div>
<div class="t" style="left:329.30px;width:120px;text-align:center;top:594.77px;font-size:8.3px;color:#878c92;font-weight:400;letter-spacing:0.45px;text-indent:0.45px;-webkit-text-stroke:0.15px #878c92;">ASSIGNEE</div>
<div class="t" style="left:415.50px;width:120px;text-align:center;top:594.77px;font-size:8.3px;color:#878c92;font-weight:400;letter-spacing:0.45px;text-indent:0.45px;-webkit-text-stroke:0.15px #878c92;">DUE DATE</div>
<div class="t" style="left:501.00px;width:120px;text-align:center;top:594.77px;font-size:8.3px;color:#878c92;font-weight:400;letter-spacing:0.45px;text-indent:0.45px;-webkit-text-stroke:0.15px #878c92;">PRIORITY</div>
<div class="t" style="left:588.00px;width:120px;text-align:center;top:594.77px;font-size:8.3px;color:#878c92;font-weight:400;letter-spacing:0.45px;text-indent:0.45px;-webkit-text-stroke:0.15px #878c92;">TIME ESTIMATE</div>
<div class="t" style="left:674.00px;width:120px;text-align:center;top:594.77px;font-size:8.3px;color:#878c92;font-weight:400;letter-spacing:0.45px;text-indent:0.45px;-webkit-text-stroke:0.15px #878c92;">TEAM</div>
<div class="t" style="left:760.00px;width:120px;text-align:center;top:594.77px;font-size:8.3px;color:#878c92;font-weight:400;letter-spacing:0.45px;text-indent:0.45px;-webkit-text-stroke:0.15px #878c92;">PROGRESS</div>
<div class="t" style="left:846.00px;width:120px;text-align:center;top:594.77px;font-size:8.3px;color:#878c92;font-weight:400;letter-spacing:0.45px;text-indent:0.45px;-webkit-text-stroke:0.15px #878c92;">TYPE</div>
<div class="t" style="left:932.50px;width:120px;text-align:center;top:594.77px;font-size:8.3px;color:#878c92;font-weight:400;letter-spacing:0.45px;text-indent:0.45px;-webkit-text-stroke:0.15px #878c92;">SPRINT</div>
<div class="b" style="left:43.8px;top:608.8px;width:1006.2px;height:98.001px;background:#fff;"></div>
<div class="b" style="left:60.8px;top:621.8335px;width:6.6px;height:6.6px;background:#1ccfa6;border-radius:1.5px;"></div>
<div class="t" style="left:80.3px;top:619.98px;font-size:12px;color:#292d34;font-weight:400;letter-spacing:0.5px;-webkit-text-stroke:0.2px #292d34;">Overhauled API</div>
<svg class="b" style="left:376.1px;top:612.1334999999999px" width="24" height="24" viewBox="0 0 24 24"><circle cx="12" cy="12" r="11" fill="none" stroke="#c9ccd1" stroke-width="1" stroke-dasharray="1.3 1.6"/><g fill="none" stroke="#b5b9bf" stroke-width="0.9"><circle cx="10.5" cy="8.2" r="2.7"/><path d="M5.8 18 Q6 12.3 10.5 12.3 Q12.5 12.3 13.5 13.3"/></g><circle cx="17.3" cy="17.2" r="4.9" fill="#b1b5ba" stroke="#fff" stroke-width="0.8"/><path d="M17.3 14.9 V19.5 M15 17.2 H19.6" stroke="#fff" stroke-width="1.3"/></svg>
<div class="t" style="left:374.72px;width:200px;text-align:center;top:620.50px;font-size:10.2px;color:#2a2e34;font-weight:400;letter-spacing:0.35px;text-indent:0.35px;">Mon</div>
<svg class="b" style="left:556.5px;top:618.8335px" width="11" height="14" viewBox="0 0 11 14"><path d="M1 0.5 H9.8 L7.6 3.7 L9.8 6.9 H1.9 V13.3 H1 Z" fill="#ffc400"/></svg>
<svg class="b" style="left:637.5px;top:619.7334999999999px" width="7.6" height="10.45" viewBox="0 0 8 11"><g fill="none" stroke="#c1c5ca" stroke-width="1"><path d="M1.4 0.7 Q1.4 4 4 5.5 Q6.6 4 6.6 0.7 M1.4 10.3 Q1.4 7 4 5.5 Q6.6 7 6.6 10.3"/></g><rect x="0.3" y="0" width="7.4" height="1.6" rx=".5" fill="#c1c5ca"/><rect x="0.3" y="9.4" width="7.4" height="1.6" rx=".5" fill="#c1c5ca"/></svg>
<div class="t" style="left:651.4px;top:620.40px;font-size:10.2px;color:#5d6268;font-weight:400;letter-spacing:-0.1px;">32h</div>
<div class="b" style="left:691.1px;top:608.8px;width:84.7px;height:33.067px;background:#8b0000;"></div>
<div class="t" style="left:683.50px;width:100px;text-align:center;top:620.32px;font-size:11px;color:#fff;font-weight:400;letter-spacing:0.7px;text-indent:0.7px;">Backend</div>
<div class="b" style="left:784px;top:621.1334999999999px;width:46.5px;height:8px;box-sizing:border-box;border:1px solid #5fc96f;border-radius:4px;background:#fff;"></div>
<div class="t" style="left:836px;top:620.81px;font-size:9px;color:#2fb344;font-weight:400;letter-spacing:0px;">0%</div>
<div class="b" style="left:863.4px;top:608.8px;width:84.7px;height:33.067px;background:#1abc9c;"></div>
<div class="t" style="left:855.70px;width:100px;text-align:center;top:620.32px;font-size:11px;color:#fff;font-weight:400;letter-spacing:0.7px;text-indent:0.7px;">Improveme...</div>
<div class="b" style="left:966.25px;top:617.3335px;width:51.5px;height:16.5px;background:#1cc25e;border-radius:3px;"></div>
<div class="t" style="left:962.00px;width:60px;text-align:center;top:620.00px;font-size:11.5px;color:#fff;font-weight:400;letter-spacing:0.4px;text-indent:0.4px;-webkit-text-stroke:0.08px #fff;">Sprint 3</div>
<div class="b" style="left:60.8px;top:654.5005px;width:6.6px;height:6.6px;background:#1ccfa6;border-radius:1.5px;"></div>
<div class="t" style="left:80.3px;top:652.64px;font-size:12px;color:#292d34;font-weight:400;letter-spacing:0.5px;-webkit-text-stroke:0.2px #292d34;">Translation and Localization</div>
<svg class="b" style="left:376.1px;top:644.8004999999999px" width="24" height="24" viewBox="0 0 24 24"><circle cx="12" cy="12" r="11" fill="none" stroke="#c9ccd1" stroke-width="1" stroke-dasharray="1.3 1.6"/><g fill="none" stroke="#b5b9bf" stroke-width="0.9"><circle cx="10.5" cy="8.2" r="2.7"/><path d="M5.8 18 Q6 12.3 10.5 12.3 Q12.5 12.3 13.5 13.3"/></g><circle cx="17.3" cy="17.2" r="4.9" fill="#b1b5ba" stroke="#fff" stroke-width="0.8"/><path d="M17.3 14.9 V19.5 M15 17.2 H19.6" stroke="#fff" stroke-width="1.3"/></svg>
<div class="t" style="left:374.72px;width:200px;text-align:center;top:653.17px;font-size:10.2px;color:#e5484d;font-weight:400;letter-spacing:0.35px;text-indent:0.35px;">7/3/19</div>
<svg class="b" style="left:556.5px;top:651.5005px" width="11" height="14" viewBox="0 0 11 14"><path d="M1 0.5 H9.8 L7.6 3.7 L9.8 6.9 H1.9 V13.3 H1 Z" fill="#44c8f5"/></svg>
<svg class="b" style="left:637.5px;top:652.4005px" width="7.6" height="10.45" viewBox="0 0 8 11"><g fill="none" stroke="#c1c5ca" stroke-width="1"><path d="M1.4 0.7 Q1.4 4 4 5.5 Q6.6 4 6.6 0.7 M1.4 10.3 Q1.4 7 4 5.5 Q6.6 7 6.6 10.3"/></g><rect x="0.3" y="0" width="7.4" height="1.6" rx=".5" fill="#c1c5ca"/><rect x="0.3" y="9.4" width="7.4" height="1.6" rx=".5" fill="#c1c5ca"/></svg>
<div class="t" style="left:651.4px;top:653.07px;font-size:10.2px;color:#5d6268;font-weight:400;letter-spacing:-0.1px;">40h</div>
<div class="b" style="left:691.1px;top:641.467px;width:84.7px;height:33.067px;background:#03a9f4;"></div>
<div class="t" style="left:683.50px;width:100px;text-align:center;top:652.99px;font-size:11px;color:#fff;font-weight:400;letter-spacing:0.7px;text-indent:0.7px;">Web</div>
<div class="b" style="left:784px;top:653.8004999999999px;width:46.5px;height:8px;box-sizing:border-box;border:1px solid #5fc96f;border-radius:4px;background:#fff;"></div>
<div class="t" style="left:836px;top:653.48px;font-size:9px;color:#2fb344;font-weight:400;letter-spacing:0px;">0%</div>
<div class="b" style="left:863.4px;top:641.467px;width:84.7px;height:33.067px;background:#1abc9c;"></div>
<div class="t" style="left:855.70px;width:100px;text-align:center;top:652.99px;font-size:11px;color:#fff;font-weight:400;letter-spacing:0.7px;text-indent:0.7px;">Improveme...</div>
<div class="b" style="left:966.25px;top:650.0005px;width:51.5px;height:16.5px;background:#1cc25e;border-radius:3px;"></div>
<div class="t" style="left:962.00px;width:60px;text-align:center;top:652.67px;font-size:11.5px;color:#fff;font-weight:400;letter-spacing:0.4px;text-indent:0.4px;-webkit-text-stroke:0.08px #fff;">Sprint 3</div>
<div class="b" style="left:60.8px;top:687.1675px;width:6.6px;height:6.6px;background:#1ccfa6;border-radius:1.5px;"></div>
<div class="t" style="left:80.3px;top:685.31px;font-size:12px;color:#292d34;font-weight:400;letter-spacing:0.5px;-webkit-text-stroke:0.2px #292d34;">Mobile Inbox</div>
<svg class="b" style="left:376.1px;top:677.4675px" width="24" height="24" viewBox="0 0 24 24"><circle cx="12" cy="12" r="11" fill="none" stroke="#c9ccd1" stroke-width="1" stroke-dasharray="1.3 1.6"/><g fill="none" stroke="#b5b9bf" stroke-width="0.9"><circle cx="10.5" cy="8.2" r="2.7"/><path d="M5.8 18 Q6 12.3 10.5 12.3 Q12.5 12.3 13.5 13.3"/></g><circle cx="17.3" cy="17.2" r="4.9" fill="#b1b5ba" stroke="#fff" stroke-width="0.8"/><path d="M17.3 14.9 V19.5 M15 17.2 H19.6" stroke="#fff" stroke-width="1.3"/></svg>
<div class="t" style="left:374.72px;width:200px;text-align:center;top:685.83px;font-size:10.2px;color:#e5484d;font-weight:400;letter-spacing:0.35px;text-indent:0.35px;">Jul 5</div>
<svg class="b" style="left:556.5px;top:684.1675px" width="11" height="14" viewBox="0 0 11 14"><path d="M1 0.5 H9.8 L7.6 3.7 L9.8 6.9 H1.9 V13.3 H1 Z" fill="#ffc400"/></svg>
<svg class="b" style="left:637.5px;top:685.0675px" width="7.6" height="10.45" viewBox="0 0 8 11"><g fill="none" stroke="#c1c5ca" stroke-width="1"><path d="M1.4 0.7 Q1.4 4 4 5.5 Q6.6 4 6.6 0.7 M1.4 10.3 Q1.4 7 4 5.5 Q6.6 7 6.6 10.3"/></g><rect x="0.3" y="0" width="7.4" height="1.6" rx=".5" fill="#c1c5ca"/><rect x="0.3" y="9.4" width="7.4" height="1.6" rx=".5" fill="#c1c5ca"/></svg>
<div class="t" style="left:651.4px;top:685.73px;font-size:10.2px;color:#5d6268;font-weight:400;letter-spacing:-0.1px;">32h</div>
<div class="b" style="left:691.1px;top:674.134px;width:84.7px;height:33.067px;background:#ffd30a;"></div>
<div class="t" style="left:683.50px;width:100px;text-align:center;top:685.66px;font-size:11px;color:#3b3000;font-weight:400;letter-spacing:0.7px;text-indent:0.7px;">Mobile</div>
<div class="b" style="left:784px;top:686.4675px;width:46.5px;height:8px;box-sizing:border-box;border:1px solid #5fc96f;border-radius:4px;background:#fff;"></div>
<div class="t" style="left:836px;top:686.15px;font-size:9px;color:#2fb344;font-weight:400;letter-spacing:0px;">0%</div>
<div class="b" style="left:863.4px;top:674.134px;width:84.7px;height:33.067px;background:#ff00ff;"></div>
<div class="t" style="left:855.70px;width:100px;text-align:center;top:685.66px;font-size:11px;color:#fff;font-weight:400;letter-spacing:0.7px;text-indent:0.7px;">Feature</div>
<div class="b" style="left:966.25px;top:682.6675px;width:51.5px;height:16.5px;background:#1cc25e;border-radius:3px;"></div>
<div class="t" style="left:962.00px;width:60px;text-align:center;top:685.33px;font-size:11.5px;color:#fff;font-weight:400;letter-spacing:0.4px;text-indent:0.4px;-webkit-text-stroke:0.08px #fff;">Sprint 3</div>
<div class="b" style="left:918px;top:663px;width:26.5px;height:25.6px;background:#7b68ee;border-radius:7px;box-shadow:0 1px 4px rgba(0,0,0,.15);"></div>
<svg class="b" style="left:924px;top:667px" width="15" height="16" viewBox="0 0 15 16"><g fill="none" stroke="#fff" stroke-width="1.2" stroke-linejoin="round" stroke-linecap="round"><path d="M8.5 3 H3.2 Q2.2 3 2.2 4 V13.6 Q2.2 14.5 3.2 14.5 H11.4 Q12.4 14.5 12.4 13.6 V10.5"/><path d="M5.8 11.6 L6.3 9.4 L11.8 3.9 Q12.5 3.2 13.2 3.9 Q13.9 4.6 13.2 5.3 L7.8 10.8 Z"/><path d="M4.3 1.8 V3.8 M6.5 1.8 V3.8 M8.7 1.8 V3.8"/></g></svg>
<div class="b" style="left:951.7px;top:662px;width:53.3px;height:26.6px;background:#7b68ee;border-radius:7px;box-shadow:0 1px 4px rgba(0,0,0,.15);"></div>
<svg class="b" style="left:958.3px;top:671px" width="8.5" height="8.5" viewBox="0 0 8.5 8.5"><path d="M4.25 0.3 V8.2 M0.3 4.25 H8.2" stroke="#fff" stroke-width="1.5"/></svg>
<div class="t" style="left:974.5px;top:669.87px;font-size:11.5px;color:#fff;font-weight:400;letter-spacing:0.3px;-webkit-text-stroke:0.2px #fff;">Task</div>
<div class="b" style="left:1012.9px;top:663px;width:25.7px;height:25.6px;background:#fff;border-radius:7px;box-shadow:0 1px 5px rgba(0,0,0,.13);"></div>
<svg class="b" style="left:1018px;top:668px" width="16" height="16" viewBox="0 0 16 16"><g fill="none" stroke-width="1.15"><circle cx="4.8" cy="4.8" r="1.6" stroke="#e76a9a"/><circle cx="11" cy="4.8" r="1.6" stroke="#e9b84a"/><circle cx="4.8" cy="10.7" r="1.6" stroke="#1f9e7e"/><circle cx="11" cy="10.7" r="1.6" stroke="#6f82d6"/></g></svg>
</body></html>
